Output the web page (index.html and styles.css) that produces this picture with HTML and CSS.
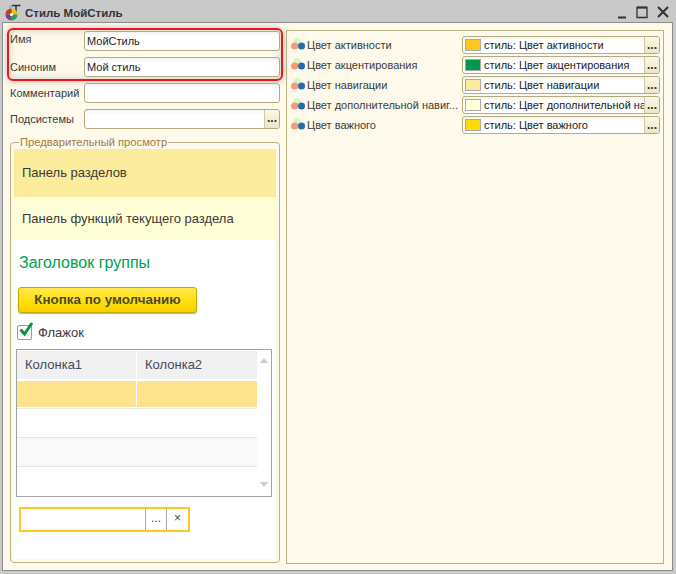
FILE: index.html
```html
<!DOCTYPE html>
<html lang="ru">
<head>
<meta charset="utf-8">
<title>Стиль МойСтиль</title>
<link rel="stylesheet" href="styles.css">
</head>
<body>
<div class="window">
  <header class="titlebar">
    <svg class="appicon" width="16" height="17" viewBox="0 0 16 17">
      <path d="M7 1.5H15.5M11 1.5V9" stroke="#333" stroke-width="1.5" fill="none"/>
      <path d="M4 1h3v5H4z" fill="#8fb7d8"/>
      <circle cx="6.5" cy="10.5" r="6" fill="#e8c020"/>
      <path d="M6.5 10.5L.5 10.5A6 6 0 0 1 6.5 4.5z" fill="#c0392b"/>
      <path d="M6.5 10.5L.5 10.5A6 6 0 0 0 6.5 16.5z" fill="#6a3fa0"/>
      <path d="M6.5 10.5V16.5A6 6 0 0 0 12.5 10.5z" fill="#2e9e4f"/>
      <circle cx="6.5" cy="10.5" r="1.6" fill="#fff"/>
    </svg>
    <span class="wintitle">Стиль МойСтиль</span>
    <div class="winbtns">
      <svg width="10" height="14" viewBox="0 0 10 14"><path d="M1 12.5H9" stroke="#333" stroke-width="2"/></svg>
      <svg width="12" height="14" viewBox="0 0 12 14"><path d="M1 2.5H11V12.5H1z" stroke="#333" stroke-width="1.3" fill="none"/><path d="M1 2.5H11" stroke="#333" stroke-width="2"/></svg>
      <svg width="12" height="14" viewBox="0 0 12 14"><path d="M1 2L11 12M11 2L1 12" stroke="#333" stroke-width="2"/></svg>
    </div>
  </header>
  <main class="body">
    <section class="left">
      <div class="highlight">
        <div class="field"><label class="lbl lbl-i">Имя</label><div class="input">МойСтиль</div></div>
        <div class="field"><label class="lbl">Синоним</label><div class="input">Мой стиль</div></div>
      </div>
      <div class="field plain"><label class="lbl">Комментарий</label><div class="input"></div></div>
      <div class="field plain"><label class="lbl">Подсистемы</label><div class="input has-btn"><span class="inner"></span><span class="dots">...</span></div></div>
      <fieldset class="group">
        <legend class="legend">Предварительный просмотр</legend>
        <div class="preview">
          <div class="panel-a">Панель разделов</div>
          <div class="panel-b">Панель функций текущего раздела</div>
          <div class="gtitle">Заголовок группы</div>
          <div class="defbtn">Кнопка по умолчанию</div>
          <div class="check">
            <span class="box"><svg width="18" height="18" viewBox="0 0 18 18"><path d="M3.5 8.5L7.5 13L15 2" stroke="#0b9444" stroke-width="3" fill="none"/></svg></span>
            <span>Флажок</span>
          </div>
          <div class="table">
            <div class="grid">
              <div class="thead"><div class="th">Колонка1</div><div class="th">Колонка2</div></div>
              <div class="sel"><div></div><div></div></div>
              <div class="row"></div>
              <div class="row alt"></div>
              <div class="row last"></div>
            </div>
            <div class="scroll">
              <svg width="8" height="5" viewBox="0 0 8 5"><path d="M0 5L4 0L8 5z" fill="#ccc"/></svg>
              <svg width="8" height="5" viewBox="0 0 8 5"><path d="M0 0L4 5L8 0z" fill="#ccc"/></svg>
            </div>
          </div>
          <div class="yinput"><span class="yfield"></span><span class="ybtn">...</span><span class="ybtn">×</span></div>
        </div>
      </fieldset>
    </section>
    <section class="right">
      <div class="crow"><svg class="cicon" width="14" height="14" viewBox="0 0 14 14"><circle cx="6" cy="3.8" r="3.8" fill="#d8f5c5"/><circle cx="3.6" cy="8" r="3.6" fill="#f79a78"/><circle cx="10.5" cy="8" r="3.5" fill="#2a6aa8"/></svg><span class="cname">Цвет активности</span><div class="input cinput"><span class="sw s1"></span><span class="ctext">стиль: Цвет активности</span><span class="dots">...</span></div></div>
      <div class="crow"><svg class="cicon" width="14" height="14" viewBox="0 0 14 14"><circle cx="6" cy="3.8" r="3.8" fill="#d8f5c5"/><circle cx="3.6" cy="8" r="3.6" fill="#f79a78"/><circle cx="10.5" cy="8" r="3.5" fill="#2a6aa8"/></svg><span class="cname">Цвет акцентирования</span><div class="input cinput"><span class="sw s2"></span><span class="ctext">стиль: Цвет акцентирования</span><span class="dots">...</span></div></div>
      <div class="crow"><svg class="cicon" width="14" height="14" viewBox="0 0 14 14"><circle cx="6" cy="3.8" r="3.8" fill="#d8f5c5"/><circle cx="3.6" cy="8" r="3.6" fill="#f79a78"/><circle cx="10.5" cy="8" r="3.5" fill="#2a6aa8"/></svg><span class="cname">Цвет навигации</span><div class="input cinput"><span class="sw s3"></span><span class="ctext">стиль: Цвет навигации</span><span class="dots">...</span></div></div>
      <div class="crow"><svg class="cicon" width="14" height="14" viewBox="0 0 14 14"><circle cx="6" cy="3.8" r="3.8" fill="#d8f5c5"/><circle cx="3.6" cy="8" r="3.6" fill="#f79a78"/><circle cx="10.5" cy="8" r="3.5" fill="#2a6aa8"/></svg><span class="cname">Цвет дополнительной навиг...</span><div class="input cinput"><span class="sw s4"></span><span class="ctext">стиль: Цвет дополнительной навигации</span><span class="dots">...</span></div></div>
      <div class="crow"><svg class="cicon" width="14" height="14" viewBox="0 0 14 14"><circle cx="6" cy="3.8" r="3.8" fill="#d8f5c5"/><circle cx="3.6" cy="8" r="3.6" fill="#f79a78"/><circle cx="10.5" cy="8" r="3.5" fill="#2a6aa8"/></svg><span class="cname">Цвет важного</span><div class="input cinput"><span class="sw s5"></span><span class="ctext">стиль: Цвет важного</span><span class="dots">...</span></div></div>
    </section>
  </main>
</div>
</body>
</html>
```
FILE: styles.css
```css
* { box-sizing: border-box; }
html, body { margin: 0; padding: 0; }
body {
  width: 676px;
  height: 574px;
  overflow: hidden;
  background: #fff;
  font-family: "Liberation Sans", Arial, sans-serif;
  font-size: 11px;
  color: #3a3a3a;
}
.window {
  width: 676px;
  height: 574px;
  display: flex;
  flex-direction: column;
  padding: 1px 1px 3px 1px;
  background: #c9c9c9;
}
.titlebar {
  height: 21px;
  flex: none;
  display: flex;
  align-items: center;
  padding: 0 6px 0 4px;
}
.appicon { margin-right: 4px; margin-top: 2px; }
.wintitle { font-weight: bold; font-size: 11.5px; color: #333; margin-top: 2px; }
.winbtns { margin-left: auto; display: flex; gap: 9px; align-items: center; padding-top: 1px; }
.winbtns svg { display: block; }
.body {
  flex: 1;
  min-height: 0;
  margin: 0 2px 0 1px;
  border: 1px solid #8d8d8d;
  background: #fdfaeb;
  display: flex;
  padding: 7px 8px 6px 5px;
  gap: 3px;
}
.left { width: 275px; flex: none; display: flex; flex-direction: column; }
.highlight {
  width: 276px;
  height: 53px;
  margin: -2px 0 0 -1px;
  padding: 1px 0 0 1px;
  border: 2px solid #f0141e;
  border-radius: 6px;
  box-shadow: 0 0 7px rgba(90,90,70,.35), inset 0 0 7px rgba(90,90,70,.3);
  display: flex;
  flex-direction: column;
  gap: 6px;
}
.field { display: flex; height: 20px; align-items: center; flex: none; }
.plain { margin: 2px 0 6px 2px; }
.plain + .plain { margin-top: 0; }
.lbl { width: 74px; flex: none; white-space: nowrap; }
.lbl-i { position: relative; top: -2px; }
.input {
  height: 20px;
  width: 196px;
  flex: none;
  border: 1px solid #b4ab80;
  border-radius: 3px;
  background: linear-gradient(#f3f3ee, #fff 4px);
  padding: 0 2px;
  line-height: 18px;
  color: #222;
  white-space: nowrap;
  display: flex;
  align-items: center;
  overflow: hidden;
}
.has-btn { padding-right: 0; }
.inner { flex: 1; }
.dots {
  width: 15px;
  flex: none;
  align-self: stretch;
  border-left: 1px solid #cfc9a8;
  background: linear-gradient(#fbf8e6, #ebe6c6);
  font-weight: bold;
  color: #333;
  font-size: 12px;
  line-height: 17px;
  text-align: center;
}
.group {
  margin: 1px 0 0 2px;
  width: 270px;
  height: 427px;
  flex: none;
  padding: 0 3px 5px 3px;
  border: 1px solid #b9b083;
  border-radius: 4px;
  min-inline-size: 0;
}
.legend {
  padding: 0 1px;
  margin-left: 5px;
  color: #a5793c;
  font-size: 11.2px;
  line-height: 13px;
}
.preview { background: #fff; height: 410px; display: flex; flex-direction: column; }
.panel-a {
  height: 48px;
  flex: none;
  background: #fbec9d;
  padding-left: 8px;
  line-height: 48px;
  font-size: 13px;
}
.panel-b {
  height: 43px;
  flex: none;
  background: #ffffd7;
  padding-left: 8px;
  line-height: 43px;
  font-size: 13px;
}
.gtitle {
  color: #00a050;
  font-size: 16px;
  line-height: 20px;
  margin: 13px 0 0 5px;
}
.defbtn {
  margin: 14px 0 0 4px;
  width: 179px;
  height: 26px;
  flex: none;
  border: 1px solid #c4a800;
  border-radius: 3px;
  background: linear-gradient(#ffe94a, #ffdc00 70%, #f5cf00);
  box-shadow: 0 1px 1px rgba(0,0,0,.3);
  font-weight: bold;
  font-size: 13.4px;
  color: #504a20;
  text-align: center;
  line-height: 24px;
}
.check {
  margin: 10px 0 0 3px;
  height: 18px;
  display: flex;
  align-items: center;
  gap: 6px;
  font-size: 13px;
}
.box {
  width: 15px;
  height: 15px;
  border: 1px solid #9a9a9a;
  border-radius: 2px;
  background: #fff;
  position: relative;
}
.box svg { position: absolute; left: -1px; top: -5px; }
.table {
  margin: 8px 0 0 2px;
  width: 256px;
  height: 148px;
  flex: none;
  border: 1px solid #a2a2a2;
  display: flex;
}
.grid { width: 240px; flex: none; display: flex; flex-direction: column; }
.thead, .sel { display: grid; grid-template-columns: 119px 120px; column-gap: 1px; background: #fff; }
.thead { height: 29px; padding-top: 1px; }
.th {
  background: #f0f0f0;
  padding-left: 8px;
  line-height: 27px;
  font-size: 13px;
  color: #4f4560;
}
.sel { height: 27px; margin-top: 2px; border-bottom: 1px solid #fff; }
.sel div { background: #fde38d; }
.row { height: 30px; border-bottom: 1px solid #e4e4e4; }
.sel + .row { border-top: 1px solid #e8e8e8; }
.alt { height: 29px; background: #f9f9f9; }
.last { border-bottom: 0; flex: 1; }
.scroll {
  flex: 1;
  display: flex;
  flex-direction: column;
  justify-content: space-between;
  align-items: center;
  padding: 8px 0 9px 0;
}
.scroll svg { display: block; }
.yinput {
  margin: 10px 0 0 5px;
  width: 171px;
  height: 25px;
  flex: none;
  border: 2px solid #ffc81e;
  display: flex;
  background: #fff;
}
.yfield { flex: 1; }
.ybtn {
  width: 21px;
  flex: none;
  border-left: 1px solid #a8a8a8;
  text-align: center;
  line-height: 19px;
  font-size: 12px;
  color: #444;
}
.ybtn:last-child { width: 22px; }
.right {
  flex: 1;
  min-width: 0;
  border: 1px solid #b9b083;
  padding: 5px 3px 0 4px;
  margin: 0;
  display: flex;
  flex-direction: column;
  gap: 2px;
}
.crow { display: flex; align-items: center; height: 18px; flex: none; }
.cicon { flex: none; margin-right: 2px; }
.cname { width: 155px; flex: none; white-space: nowrap; overflow: hidden; color: #3a3a3a; font-size: 11px; }
.cinput { width: 198px; height: 18px; padding: 0 0 0 1px; line-height: 16px; }
.sw { width: 16px; height: 12px; flex: none; border: 1px solid #aaa; margin-right: 3px; margin-left: 1px; }
.ctext { flex: 1; min-width: 0; overflow: hidden; font-size: 11px; }
.s1 { background: #ffc81e; }
.s2 { background: #00964b; }
.s3 { background: #fbec9d; }
.s4 { background: #ffffd7; }
.s5 { background: #ffdc00; }
```
